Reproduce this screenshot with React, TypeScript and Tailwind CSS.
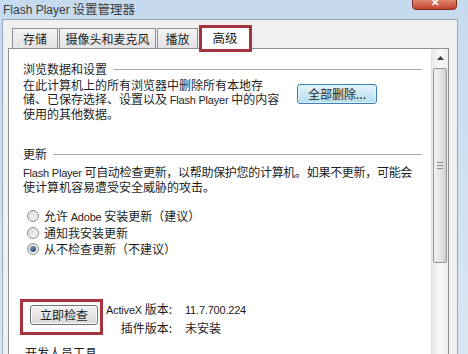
import React from "react";

const font = { fontFamily: '"Noto Sans CJK SC", "Noto Sans", sans-serif' };

function Radio({ checked }: { checked?: boolean }) {
  return (
    <span className="relative flex h-[12px] w-[12px] items-center justify-center rounded-full border border-[#8e8f8f] bg-gradient-to-br from-[#d9d9d9] to-[#f7f7f7]">
      {checked && (
        <span className="h-[6px] w-[6px] rounded-full bg-gradient-to-br from-[#8aa3c0] to-[#1f3e63]" />
      )}
    </span>
  );
}

function SectionTitle({ text }: { text: string }) {
  return (
    <div className="flex h-[16px] items-center gap-[6px] pr-[9px]">
      <span className="text-[12px] leading-[16px] text-[#1e1e1e]">{text}</span>
      <span className="h-px flex-1 bg-[#a9a9a9]" />
    </div>
  );
}

const Lat = ({ children }: { children: React.ReactNode }) => (
  <span className="font-['Liberation_Sans',sans-serif] text-[11px] tracking-[-0.2px]">{children}</span>
);

export default function App() {
  return (
    <div
      className="relative h-[354px] w-[468px] overflow-hidden bg-gradient-to-b from-[#c6daef] to-[#d9e6f3] text-[#1e1e1e]"
      style={font}
    >
      {/* title bar */}
      <div className="flex h-[19px] items-center pl-[3px]">
        <span className="whitespace-nowrap text-[12.5px] leading-[14px] text-[#3a3a3a]">
          <span className="font-['Liberation_Sans',sans-serif] text-[12px]">Flash Player</span> 设置管理器
        </span>
      </div>
      <div className="absolute left-[412px] top-[-4px] flex h-[14px] w-[45px] items-start justify-center rounded-b-[4px] border border-[#7a2a1e] bg-gradient-to-b from-[#e59a86] to-[#c4402a]">
        <span className="mt-[-1px] text-[10px] font-bold leading-[12px] text-white">✕</span>
      </div>

      <div className="flex h-[335px]">
        <div className="w-[2px]" />
        {/* client area */}
        <div className="flex w-[456px] flex-col border-l border-t border-r border-[#97a6b8] bg-[#f0f0f0] pl-[5px] pr-[8px] pt-[5px]">
          {/* tabs */}
          <div className="relative z-10 flex h-[23px] items-end">
            <div className="ml-[4px] flex h-[20px] w-[46px] items-center justify-center border border-b-0 border-[#8e8f8f] bg-gradient-to-b from-[#f4f4f4] to-[#e2e2e2] text-[12px]">存储</div>
            <div className="ml-[1px] flex h-[20px] w-[97px] items-center justify-center border border-b-0 border-[#8e8f8f] bg-gradient-to-b from-[#f4f4f4] to-[#e2e2e2] text-[12px]">摄像头和麦克风</div>
            <div className="ml-[1px] flex h-[20px] w-[41px] items-center justify-center border border-b-0 border-[#8e8f8f] bg-gradient-to-b from-[#f4f4f4] to-[#e2e2e2] text-[12px]">播放</div>
            <div className="relative ml-[2px] flex h-[23px] w-[50px] translate-y-[1px] items-center justify-center border border-b-0 border-[#8e8f8f] bg-white text-[12.5px]">
              高级
              <div className="absolute left-[-2px] top-[-2px] h-[27px] w-[53px] border-[3px] border-[#a8323d]" />
            </div>
          </div>
          {/* panel */}
          <div className="flex flex-1 border border-b-0 border-[#8e8f8f] bg-white">
            <div className="flex flex-1 flex-col pl-[14px] pt-[12px]">
              <SectionTitle text="浏览数据和设置" />
              <div className="mt-[1px] flex">
                <p className="w-[274px] whitespace-nowrap text-[12px] leading-[14px]">
                  在此计算机上的所有浏览器中删除所有本地存<br />
                  储、已保存选择、设置以及 <Lat>Flash Player</Lat> 中的内容<br />
                  使用的其他数据。
                </p>
                <div className="mt-[6px] flex h-[20px] w-[80px] items-center justify-center rounded-[3px] border border-[#3c7fb1] bg-gradient-to-b from-[#e5f4fc] to-[#b3dcef] text-[12px] shadow-[inset_0_0_0_1px_#dff2fb]">
                  全部删除...
                </div>
              </div>
              <div className="mt-[25px]">
                <SectionTitle text="更新" />
              </div>
              <p className="mt-[3px] whitespace-nowrap text-[12px] leading-[14px]">
                <Lat>Flash Player</Lat> <span className="tracking-[-0.3px]">可自动检查更新，以帮助保护您的计算机。如果不更新，可能会</span><br />
                使计算机容易遭受安全威胁的攻击。
              </p>
              <div className="mt-[14px] flex flex-col pl-[4px]">
                <div className="flex h-[16.5px] items-center gap-[5px] whitespace-nowrap text-[12px]">
                  <Radio />
                  <span>允许 <Lat>Adobe</Lat> 安装更新（建议）</span>
                </div>
                <div className="flex h-[16.5px] items-center gap-[5px] whitespace-nowrap text-[12px]">
                  <Radio />
                  <span>通知我安装更新</span>
                </div>
                <div className="flex h-[16.5px] items-center gap-[5px] whitespace-nowrap text-[12px]">
                  <Radio checked />
                  <span>从不检查更新（不建议）</span>
                </div>
              </div>
              <div className="mt-[42px] flex items-start">
                <div className="relative ml-[7px] mt-[5.5px] flex h-[20px] w-[68px] items-center justify-center rounded-[3px] border border-[#707070] bg-gradient-to-b from-[#f2f2f2] to-[#d8d8d8] text-[12px] shadow-[inset_0_0_0_1px_#fbfbfb]">
                  立即检查
                  <div className="absolute left-[-11px] top-[-7px] h-[36px] w-[83px] border-[3px] border-[#a8323d]" />
                </div>
                <div className="ml-[8px] grid grid-cols-[66px_auto] gap-x-[13px] whitespace-nowrap text-[12px] leading-[17px]">
                  <span className="text-right"><Lat>ActiveX</Lat> 版本:</span>
                  <span><Lat>11.7.700.224</Lat></span>
                  <span className="text-right">插件版本:</span>
                  <span>未安装</span>
                </div>
              </div>
              <div className="ml-[2px] mt-[9px] whitespace-nowrap text-[12px] leading-[16px]">开发人员工具</div>
            </div>
            {/* scrollbar */}
            <div className="flex w-[17px] flex-col border-l border-[#e2e2e2] bg-gradient-to-r from-[#e9e9e9] via-[#f7f7f7] to-[#ececec] px-[1px] pt-[2px]">
              <div className="flex h-[14px] items-center justify-center">
                <svg width="7" height="4" viewBox="0 0 7 4"><path d="M0 4 L3.5 0 L7 4 Z" fill="#3b3b3b" /></svg>
              </div>
              <div className="mt-[3px] flex h-[195px] items-center justify-center rounded-[2px] border border-[#959595] bg-gradient-to-r from-[#f2f2f2] via-[#e6e6e6] to-[#cfcfcf]">
                <svg width="6" height="7" viewBox="0 0 6 7">
                  <path d="M0 0.5 H6 M0 3.5 H6 M0 6.5 H6" stroke="#8a8a8a" strokeWidth="1" />
                </svg>
              </div>
            </div>
          </div>
        </div>
      </div>
    </div>
  );
}
